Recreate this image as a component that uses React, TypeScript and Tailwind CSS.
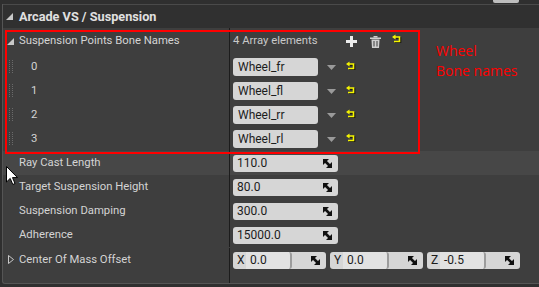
import React from "react";

const labelCls = "text-[11.3px] text-[#d4d4d4]";

function ResetArrow() {
  return (
    <svg width="11" height="9" viewBox="0 0 11 9" className="block">
      <path d="M4 3 H8.5 V7.5 H3" fill="none" stroke="#111" strokeWidth="1.6" transform="translate(1,1)" />
      <path d="M4 3 H8.5 V7.5 H3" fill="none" stroke="#f5f500" strokeWidth="1.6" />
      <polygon points="1,3 4.5,0.5 4.5,5.5" fill="#f5f500" />
    </svg>
  );
}

function DropArrow() {
  return (
    <svg width="9" height="5" viewBox="0 0 9 5" className="block">
      <polygon points="0,0 9,0 4.5,5" fill="#9a9a9a" />
    </svg>
  );
}

function SpinIcon() {
  return (
    <svg width="9" height="9" viewBox="0 0 9 9" className="block">
      <polygon points="0,0 6,0 0,6" fill="#111" />
      <polygon points="9,9 3,9 9,3" fill="#111" />
      <line x1="1" y1="1" x2="8" y2="8" stroke="#111" strokeWidth="2.6" />
    </svg>
  );
}

function Expanded() {
  return (
    <svg width="7" height="7" viewBox="0 0 7 7" className="block">
      <polygon points="7,0 7,7 0,7" fill="#c8c8c8" />
    </svg>
  );
}

function Grip() {
  return (
    <svg width="5" height="14" viewBox="0 0 5 14" className="block">
      {[0, 1, 2, 3, 4, 5, 6].map((i) => (
        <g key={i}>
          <rect x="0" y={i * 2} width="1" height="1" fill="#6a6a6a" />
          <rect x="3" y={i * 2} width="1" height="1" fill="#6a6a6a" />
        </g>
      ))}
    </svg>
  );
}

function NumberField({ value }: { value: string }) {
  return (
    <div className="w-[105px] h-[17px] rounded-[3px] bg-[#d6d6d6] flex items-center pl-[4px] pr-[6px] text-[12px] text-[#1c1c1c]">
      <span className="flex-1">{value}</span>
      <SpinIcon />
    </div>
  );
}

function VecField({ axis, value }: { axis: string; value: string }) {
  return (
    <div className="w-[93px] h-[17px] rounded-[3px] bg-[#d6d6d6] flex items-center text-[12px] text-[#1c1c1c]">
      <span className="w-[13px] pl-[4px]">{axis}</span>
      <div className="w-[46px] h-[17px] bg-[#e2e2e2] border-r-2 border-[#9c9c9c] rounded-r-[3px] flex items-center pl-[4px]">
        {value}
      </div>
      <span className="flex-1" />
      <span className="pr-[6px]">
        <SpinIcon />
      </span>
    </div>
  );
}

function Row({ label, children, highlight, indent = 16, lead }: { label: React.ReactNode; children: React.ReactNode; highlight?: boolean; indent?: number; lead?: React.ReactNode }) {
  return (
    <div className={`flex h-[24px] ${highlight ? "bg-[#474747]" : ""}`}>
      <div className="w-[226px] flex items-center relative" style={{ paddingLeft: indent }}>
        {lead}
        <span className={labelCls}>{label}</span>
      </div>
      <div className="w-px bg-[#1c1c1c]" />
      <div className="flex-1 flex items-center pl-[3px]">{children}</div>
    </div>
  );
}

export default function App() {
  const wheels = ["Wheel_fr", "Wheel_fl", "Wheel_rr", "Wheel_rl"];
  return (
    <div className="w-[539px] h-[287px] bg-[#2f2f2f] relative overflow-hidden" style={{ fontFamily: "Roboto, 'Liberation Sans', sans-serif" }}>
      <div className="h-[4px] flex">
        <div className="ml-[493px] w-[26px] h-[3px] bg-[#bdbdbd] rounded-b-[2px]" />
      </div>
      <div className="ml-[2px] h-[280px] bg-[#3e3e3e] border-l border-b border-[#555] rounded-bl-[3px] flex flex-col">
        {/* Category header */}
        <div className="h-[24px] bg-[#303030] border-t border-[#4a4a4a] flex items-center pl-[3px] gap-[6px]">
          <Expanded />
          <span className="text-[12.7px] font-bold text-[#e0e0e0]">Arcade VS / Suspension</span>
        </div>

        {/* Array header */}
        <div className="flex h-[27px]">
          <div className="w-[226px] flex items-center pl-[4px] gap-[5px]">
            <Expanded />
            <span className={labelCls}>Suspension Points Bone Names</span>
          </div>
          <div className="w-px bg-[#1c1c1c]" />
          <div className="flex-1 flex items-center pl-[3px]">
            <span className="text-[11.3px] text-[#c8c8c8] w-[113px]">4 Array elements</span>
            <svg width="11" height="11" viewBox="0 0 11 11" className="block">
              <rect x="4" y="0" width="3" height="11" fill="#ececec" />
              <rect x="0" y="4" width="11" height="3" fill="#ececec" />
            </svg>
            <svg width="11" height="12" viewBox="0 0 11 12" className="block ml-[13px]">
              <rect x="0" y="1.5" width="11" height="1.5" fill="#cfcfcf" />
              <rect x="3.5" y="0" width="4" height="1.5" fill="#cfcfcf" />
              <path d="M1.5 3.5 H9.5 L9 12 H2 Z" fill="#cfcfcf" />
              <rect x="3.5" y="5" width="1" height="5.5" fill="#3e3e3e" />
              <rect x="6.5" y="5" width="1" height="5.5" fill="#3e3e3e" />
            </svg>
            <span className="ml-[10px] mt-[-6px]">
              <ResetArrow />
            </span>
          </div>
        </div>

        {wheels.map((w, i) => (
          <Row
            key={w}
            label={i}
            indent={28}
            lead={
              <span className="absolute left-[6px] top-[5px]">
                <Grip />
              </span>
            }
          >
            <div className="w-[85px] h-[18px] rounded-[3px] bg-[#d6d6d6] flex items-center pl-[5px] text-[12px] text-[#1c1c1c]">{w}</div>
            <span className="ml-[9px]">
              <DropArrow />
            </span>
            <span className="ml-[9px] mt-[-3px]">
              <ResetArrow />
            </span>
          </Row>
        ))}

        <Row label="Ray Cast Length" highlight>
          <NumberField value="110.0" />
        </Row>
        <Row label="Target Suspension Height">
          <NumberField value="80.0" />
        </Row>
        <Row label="Suspension Damping">
          <NumberField value="300.0" />
        </Row>
        <Row label="Adherence">
          <NumberField value="15000.0" />
        </Row>
        <div className="h-px" />
        <Row
          label="Center Of Mass Offset"
          lead={
            <svg width="6" height="9" viewBox="0 0 6 9" className="absolute left-[5px] top-[7px]">
              <polygon points="0.5,0.5 5.5,4.5 0.5,8.5" fill="none" stroke="#c8c8c8" strokeWidth="1" />
            </svg>
          }
        >
          <div className="flex gap-[4px]">
            <VecField axis="X" value="0.0" />
            <VecField axis="Y" value="0.0" />
            <VecField axis="Z" value="-0.5" />
          </div>
        </Row>
        <div className="flex flex-1">
          <div className="w-[226px]" />
          <div className="w-px bg-[#1c1c1c]" />
        </div>
      </div>

      {/* annotation */}
      <div className="absolute left-[5px] top-[30px] w-[415px] h-[124px] border-2 border-[#ff0000] pointer-events-none" />
      <div className="absolute left-[436px] top-[41px] text-[14px] leading-[20px] text-[#ff0000]" style={{ fontFamily: "'Open Sans', sans-serif" }}>
        Wheel
        <br />
        Bone names
      </div>

      {/* mouse cursor */}
      <svg width="13" height="20" viewBox="0 0 13 20" className="absolute left-[6px] top-[166px]">
        <path d="M0.5 0.5 V16 L4.2 12.4 L6.8 18.5 L9 17.5 L6.5 11.6 H11.5 Z" fill="#fff" stroke="#000" strokeWidth="1" />
      </svg>
    </div>
  );
}
